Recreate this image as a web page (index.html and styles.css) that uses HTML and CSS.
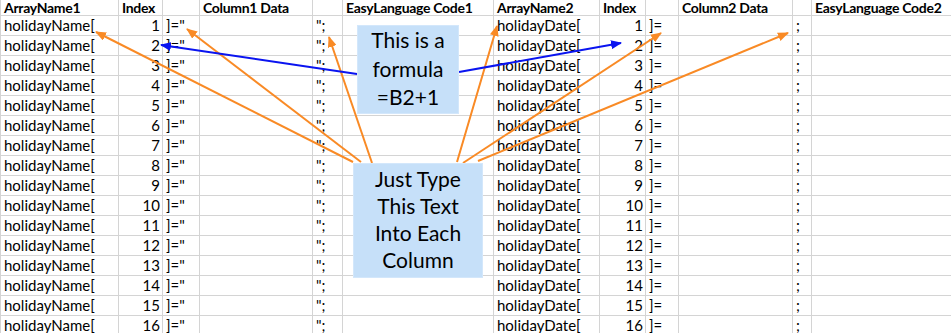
FILE: index.html
```html
<!DOCTYPE html>
<html>
<head>
<meta charset="utf-8">
<link rel="stylesheet" href="styles.css">
</head>
<body>
<div class="sheet">
  <div class="grid">
    <div class="c h">ArrayName1</div><div class="c h">Index</div><div class="c h"></div><div class="c h">Column1 Data</div><div class="c h"></div><div class="c h">EasyLanguage Code1</div><div class="c h">ArrayName2</div><div class="c h">Index</div><div class="c h"></div><div class="c h">Column2 Data</div><div class="c h"></div><div class="c h">EasyLanguage Code2</div>
    <div class="c">holidayName[</div><div class="c r">1</div><div class="c">]="</div><div class="c"></div><div class="c">";</div><div class="c"></div><div class="c">holidayDate[</div><div class="c r">1</div><div class="c">]=</div><div class="c"></div><div class="c">;</div><div class="c"></div>
    <div class="c">holidayName[</div><div class="c r">2</div><div class="c">]="</div><div class="c"></div><div class="c">";</div><div class="c"></div><div class="c">holidayDate[</div><div class="c r">2</div><div class="c">]=</div><div class="c"></div><div class="c">;</div><div class="c"></div>
    <div class="c">holidayName[</div><div class="c r">3</div><div class="c">]="</div><div class="c"></div><div class="c">";</div><div class="c"></div><div class="c">holidayDate[</div><div class="c r">3</div><div class="c">]=</div><div class="c"></div><div class="c">;</div><div class="c"></div>
    <div class="c">holidayName[</div><div class="c r">4</div><div class="c">]="</div><div class="c"></div><div class="c">";</div><div class="c"></div><div class="c">holidayDate[</div><div class="c r">4</div><div class="c">]=</div><div class="c"></div><div class="c">;</div><div class="c"></div>
    <div class="c">holidayName[</div><div class="c r">5</div><div class="c">]="</div><div class="c"></div><div class="c">";</div><div class="c"></div><div class="c">holidayDate[</div><div class="c r">5</div><div class="c">]=</div><div class="c"></div><div class="c">;</div><div class="c"></div>
    <div class="c">holidayName[</div><div class="c r">6</div><div class="c">]="</div><div class="c"></div><div class="c">";</div><div class="c"></div><div class="c">holidayDate[</div><div class="c r">6</div><div class="c">]=</div><div class="c"></div><div class="c">;</div><div class="c"></div>
    <div class="c">holidayName[</div><div class="c r">7</div><div class="c">]="</div><div class="c"></div><div class="c">";</div><div class="c"></div><div class="c">holidayDate[</div><div class="c r">7</div><div class="c">]=</div><div class="c"></div><div class="c">;</div><div class="c"></div>
    <div class="c">holidayName[</div><div class="c r">8</div><div class="c">]="</div><div class="c"></div><div class="c">";</div><div class="c"></div><div class="c">holidayDate[</div><div class="c r">8</div><div class="c">]=</div><div class="c"></div><div class="c">;</div><div class="c"></div>
    <div class="c">holidayName[</div><div class="c r">9</div><div class="c">]="</div><div class="c"></div><div class="c">";</div><div class="c"></div><div class="c">holidayDate[</div><div class="c r">9</div><div class="c">]=</div><div class="c"></div><div class="c">;</div><div class="c"></div>
    <div class="c">holidayName[</div><div class="c r">10</div><div class="c">]="</div><div class="c"></div><div class="c">";</div><div class="c"></div><div class="c">holidayDate[</div><div class="c r">10</div><div class="c">]=</div><div class="c"></div><div class="c">;</div><div class="c"></div>
    <div class="c">holidayName[</div><div class="c r">11</div><div class="c">]="</div><div class="c"></div><div class="c">";</div><div class="c"></div><div class="c">holidayDate[</div><div class="c r">11</div><div class="c">]=</div><div class="c"></div><div class="c">;</div><div class="c"></div>
    <div class="c">holidayName[</div><div class="c r">12</div><div class="c">]="</div><div class="c"></div><div class="c">";</div><div class="c"></div><div class="c">holidayDate[</div><div class="c r">12</div><div class="c">]=</div><div class="c"></div><div class="c">;</div><div class="c"></div>
    <div class="c">holidayName[</div><div class="c r">13</div><div class="c">]="</div><div class="c"></div><div class="c">";</div><div class="c"></div><div class="c">holidayDate[</div><div class="c r">13</div><div class="c">]=</div><div class="c"></div><div class="c">;</div><div class="c"></div>
    <div class="c">holidayName[</div><div class="c r">14</div><div class="c">]="</div><div class="c"></div><div class="c">";</div><div class="c"></div><div class="c">holidayDate[</div><div class="c r">14</div><div class="c">]=</div><div class="c"></div><div class="c">;</div><div class="c"></div>
    <div class="c">holidayName[</div><div class="c r">15</div><div class="c">]="</div><div class="c"></div><div class="c">";</div><div class="c"></div><div class="c">holidayDate[</div><div class="c r">15</div><div class="c">]=</div><div class="c"></div><div class="c">;</div><div class="c"></div>
    <div class="c">holidayName[</div><div class="c r">16</div><div class="c">]="</div><div class="c"></div><div class="c">";</div><div class="c"></div><div class="c">holidayDate[</div><div class="c r">16</div><div class="c">]=</div><div class="c"></div><div class="c">;</div><div class="c"></div>
  </div>

  <svg class="arrows" width="951" height="333" viewBox="0 0 951 333">
    <defs>
      <marker id="ho" markerUnits="userSpaceOnUse" markerWidth="11" markerHeight="9" refX="10" refY="4.5" orient="auto">
        <path d="M0,0 L11,4.5 L0,9 Z" fill="#f98a25"/>
      </marker>
      <marker id="hb" markerUnits="userSpaceOnUse" markerWidth="11" markerHeight="9" refX="10" refY="4.5" orient="auto">
        <path d="M0,0 L11,4.5 L0,9 Z" fill="#0a14f0"/>
      </marker>
    </defs>
    <g class="orange">
      <line x1="353" y1="162" x2="96" y2="32" marker-end="url(#ho)"/>
      <line x1="361" y1="162" x2="187" y2="29" marker-end="url(#ho)"/>
      <line x1="372" y1="163" x2="329" y2="37" marker-end="url(#ho)"/>
      <line x1="457" y1="162" x2="497" y2="26" marker-end="url(#ho)"/>
      <line x1="463" y1="163" x2="661" y2="33" marker-end="url(#ho)"/>
      <line x1="478" y1="161" x2="788" y2="33" marker-end="url(#ho)"/>
    </g>
    <g class="blue">
      <line x1="357" y1="74" x2="161" y2="45" marker-end="url(#hb)"/>
      <line x1="459" y1="72" x2="621" y2="43" marker-end="url(#hb)"/>
    </g>
  </svg>

  <div class="callout callout-formula">This is a<br>formula<br>=B2+1</div>
  <div class="callout callout-type">Just Type<br>This Text<br>Into Each<br>Column</div>
</div>
</body>
</html>
```

FILE: styles.css
```css
html, body {
  margin: 0;
  padding: 0;
  background: #ffffff;
}

.sheet {
  position: relative;
  width: 951px;
  height: 333px;
  overflow: hidden;
  background: #ffffff;
}

.grid {
  display: grid;
  grid-template-columns: 118px 44px 37px 113px 30px 151px 106px 46px 33px 114px 19px 200px;
  grid-template-rows: 16px;
  grid-auto-rows: 20px;
  border-left: 1px solid #d4d4d4;
  width: max-content;
}

.c {
  box-sizing: border-box;
  border-right: 1px solid #d4d4d4;
  border-bottom: 1px solid #d4d4d4;
  padding: 0 3px;
  font-family: Lato, "Open Sans", sans-serif;
  font-size: 15px;
  line-height: 19px;
  color: #000000;
  white-space: nowrap;
  overflow: hidden;
}

.h {
  font-weight: 700;
  font-size: 14px;
  letter-spacing: -0.3px;
  line-height: 15px;
  overflow: visible;
}

.r {
  text-align: right;
  padding-right: 2px;
}

.arrows {
  position: absolute;
  left: 0;
  top: 0;
}

.orange line {
  stroke: #f98a25;
  stroke-width: 2;
}

.blue line {
  stroke: #0a14f0;
  stroke-width: 2;
}

.callout {
  position: absolute;
  box-sizing: border-box;
  background: #c6e0f9;
  border: 1px solid #d3e7fb;
  color: #000000;
  font-family: Lato, "Open Sans", sans-serif;
  text-align: center;
}

.callout-formula {
  left: 357px;
  top: 25px;
  width: 102px;
  height: 89px;
  font-size: 21px;
  line-height: 28.5px;
}

.callout-type {
  left: 353px;
  top: 163px;
  width: 130px;
  height: 115px;
  font-size: 21px;
  line-height: 27px;
  padding-top: 1px;
}
```
